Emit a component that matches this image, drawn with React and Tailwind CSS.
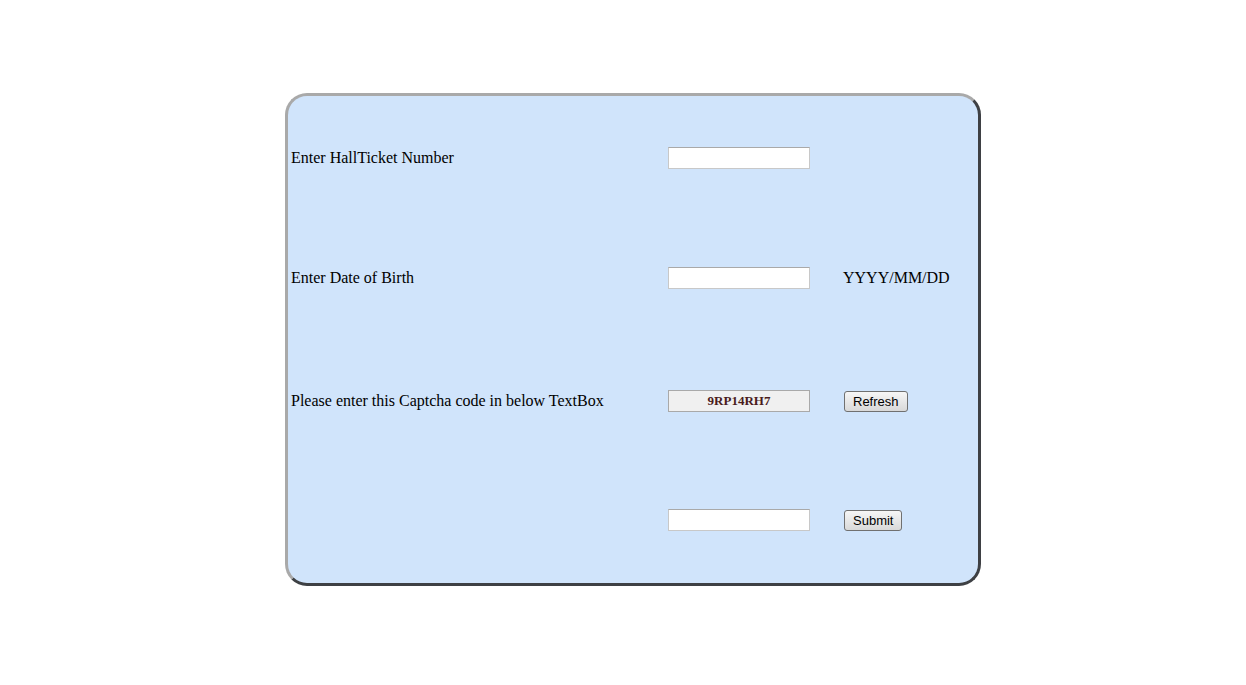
import React from 'react';

const serif = { fontFamily: '"Liberation Serif", "Times New Roman", serif' };

const Field = ({ value, readOnly }) => (
  <input
    type="text"
    defaultValue={value}
    readOnly={readOnly}
    className={
      readOnly
        ? 'w-[142px] h-[22px] border border-[#a9a9a9] bg-[#f0f0f0] text-center text-[13px] font-bold text-[#4a1c1c] outline-none'
        : 'w-[142px] h-[22px] border border-[#c8c8c8] border-t-[#a9a9a9] bg-white outline-none'
    }
    style={serif}
  />
);

const Btn = ({ children }) => (
  <button
    className="h-[21px] px-[8px] rounded-[3px] border border-[#707070] bg-gradient-to-b from-[#f6f6f6] to-[#d9d9d9] text-[13px] leading-none text-black"
    style={{ fontFamily: '"Liberation Sans", Arial, sans-serif' }}
  >
    {children}
  </button>
);

const App = () => {
  const rows = [
    { label: 'Enter HallTicket Number', field: <Field />, extra: null, h: 'h-[120px]' },
    { label: 'Enter Date of Birth', field: <Field />, extra: <span className="-ml-px text-[16px]">YYYY/MM/DD</span>, h: 'h-[120px]' },
    { label: 'Please enter this Captcha code in below TextBox', field: <Field value="9RP14RH7" readOnly />, extra: <Btn>Refresh</Btn>, h: 'h-[126px]' },
    { label: '', field: <Field />, extra: <Btn>Submit</Btn>, h: 'h-[112px]' },
  ];

  return (
    <div className="min-h-[685px] w-full bg-white pt-[93px]" style={serif}>
      <div className="ml-[285px] w-[696px] h-[493px] rounded-[22px] border-[3px] border-t-[#a9a9a9] border-l-[#a9a9a9] border-r-[#3e4044] border-b-[#3e4044] bg-[#d0e4fb] pt-[2px] text-black">
        {rows.map((r, i) => (
          <div key={i} className={`flex items-center ${r.h}`}>
            <div className="w-[380px] pl-[3px] text-[16px]">{r.label}</div>
            <div className="w-[176px] flex items-center">{r.field}</div>
            <div className="flex items-center">{r.extra}</div>
          </div>
        ))}
      </div>
    </div>
  );
};

export default App;
